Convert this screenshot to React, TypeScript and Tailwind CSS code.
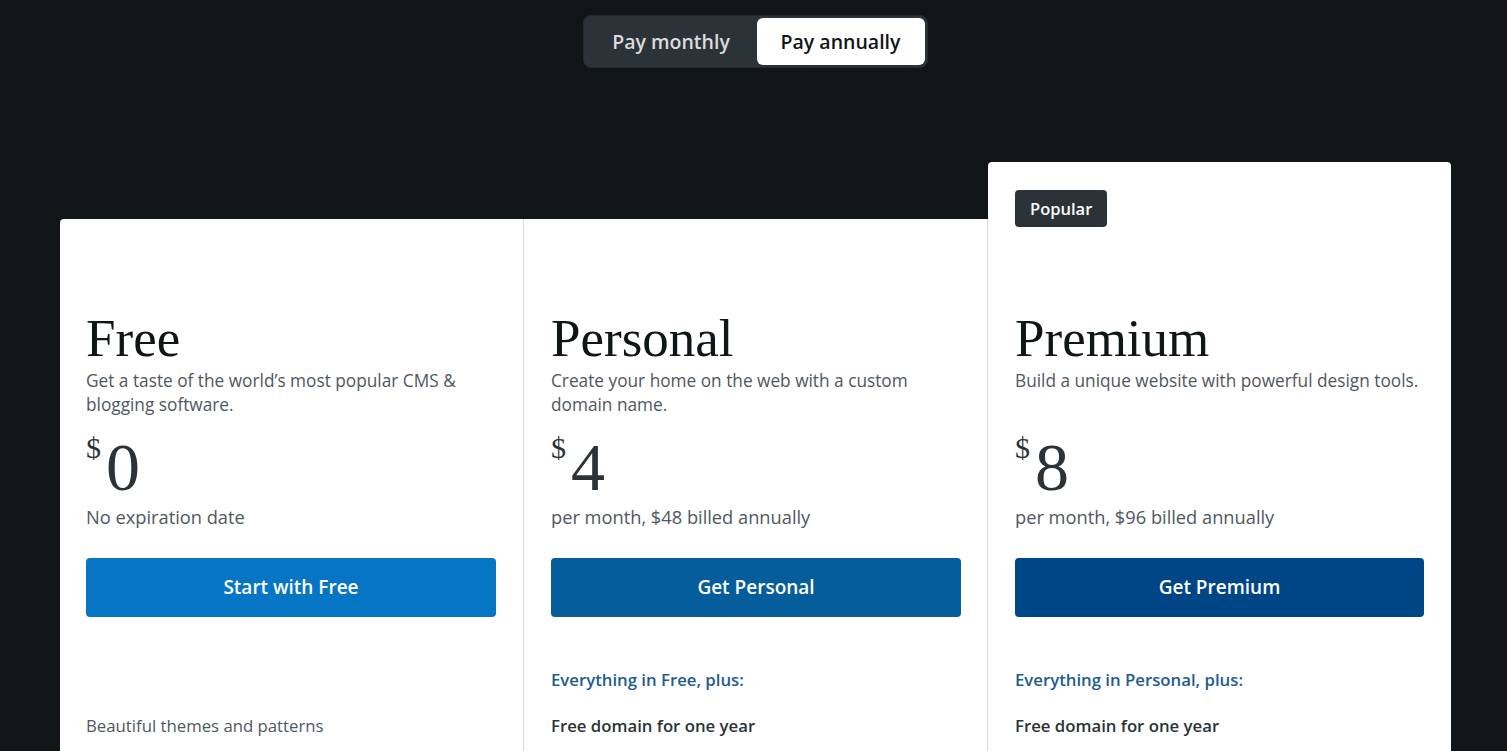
import { useState } from "react";

type Plan = {
  name: string;
  desc: string;
  price: string;
  note: string;
  cta: string;
  btn: string;
  plus: string | null;
  features: { text: string; strong?: boolean }[];
  popular?: boolean;
};

const plans: Plan[] = [
  {
    name: "Free",
    desc: "Get a taste of the world’s most popular CMS & blogging software.",
    price: "0",
    note: "No expiration date",
    cta: "Start with Free",
    btn: "bg-[#0675c4]",
    plus: null,
    features: [{ text: "Beautiful themes and patterns" }],
  },
  {
    name: "Personal",
    desc: "Create your home on the web with a custom domain name.",
    price: "4",
    note: "per month, $48 billed annually",
    cta: "Get Personal",
    btn: "bg-[#055d9c]",
    plus: "Everything in Free, plus:",
    features: [{ text: "Free domain for one year", strong: true }],
  },
  {
    name: "Premium",
    desc: "Build a unique website with powerful design tools.",
    price: "8",
    note: "per month, $96 billed annually",
    cta: "Get Premium",
    btn: "bg-[#004687]",
    plus: "Everything in Personal, plus:",
    features: [{ text: "Free domain for one year", strong: true }],
    popular: true,
  },
];

const sans = "font-['Open_Sans','Noto_Sans',sans-serif]";
const serif = "font-['Liberation_Serif','DejaVu_Serif',serif]";

function PlanCard({ plan, index }: { plan: Plan; index: number }) {
  const edge =
    index === 0
      ? "mt-[57px] rounded-tl border-r border-[#dcdcde] pl-[26px] pr-[27px]"
      : index === 1
      ? "mt-[57px] border-r border-[#dcdcde] pl-[27px] pr-[26px]"
      : "rounded-t px-[27px]";

  return (
    <div className={`bg-white pb-16 ${edge}`}>
      {plan.popular ? (
        <div className="pt-[28px]">
          <span className="inline-block rounded bg-[#2c3338] px-[15px] py-[7px] text-[16.5px] font-semibold leading-[23px] text-white">
            Popular
          </span>
        </div>
      ) : null}
      <h2
        className={`${serif} text-[53px] leading-[60px] text-[#101517] ${
          plan.popular ? "mt-[81px]" : "mt-[89px]"
        }`}
      >
        {plan.name}
      </h2>
      <p className="mt-[1px] min-h-[48px] text-[17.25px] leading-[24px] text-[#50575e]">
        {plan.desc}
      </p>
      <div className={`${serif} mt-[16px] flex items-start text-[#2c3338]`}>
        <span className="text-[30px] leading-none">$</span>
        <span className="ml-[5px] text-[68px] leading-none">{plan.price}</span>
      </div>
      <p className="mt-[4px] text-[18.25px] leading-[24px] text-[#50575e]">{plan.note}</p>
      <button
        className={`mt-[29px] h-[59px] w-full rounded ${plan.btn} text-[19px] font-semibold text-white`}
      >
        {plan.cta}
      </button>
      <p
        className={`mt-[51px] text-[16.75px] font-semibold leading-[24px] text-[#1d5c91] ${
          plan.plus ? "" : "invisible"
        }`}
      >
        {plan.plus ?? "–"}
      </p>
      <ul className="mt-[22px] flex flex-col gap-[22px]">
        {plan.features.map((f) => (
          <li
            key={f.text}
            className={`text-[16.75px] leading-[24px] ${
              f.strong ? "font-semibold text-[#2c3338]" : "text-[#50575e]"
            }`}
          >
            {f.text}
          </li>
        ))}
      </ul>
    </div>
  );
}

export default function App() {
  const [annual, setAnnual] = useState(true);

  return (
    <div className={`${sans} min-h-screen overflow-hidden bg-[#101517] pt-[15px]`}>
      {/* billing toggle */}
      <div className="flex justify-center pl-[3px]">
        <div className="flex h-[53px] rounded-lg border border-[#23292e] bg-[#2c3338] p-[2px]">
          <button
            onClick={() => setAnnual(false)}
            className={`w-[171px] rounded-md text-[19.5px] font-semibold ${
              annual ? "text-[#dcdcde]" : "bg-white text-[#101517]"
            }`}
          >
            Pay monthly
          </button>
          <button
            onClick={() => setAnnual(true)}
            className={`w-[168px] rounded-md text-[19.5px] font-semibold ${
              annual ? "bg-white text-[#101517]" : "text-[#dcdcde]"
            }`}
          >
            Pay annually
          </button>
        </div>
      </div>

      {/* plans */}
      <div className="ml-[60px] mt-[94px] grid w-[1391px] grid-cols-[464px_464px_463px] items-start">
        {plans.map((p, i) => (
          <PlanCard key={p.name} plan={p} index={i} />
        ))}
      </div>
    </div>
  );
}
